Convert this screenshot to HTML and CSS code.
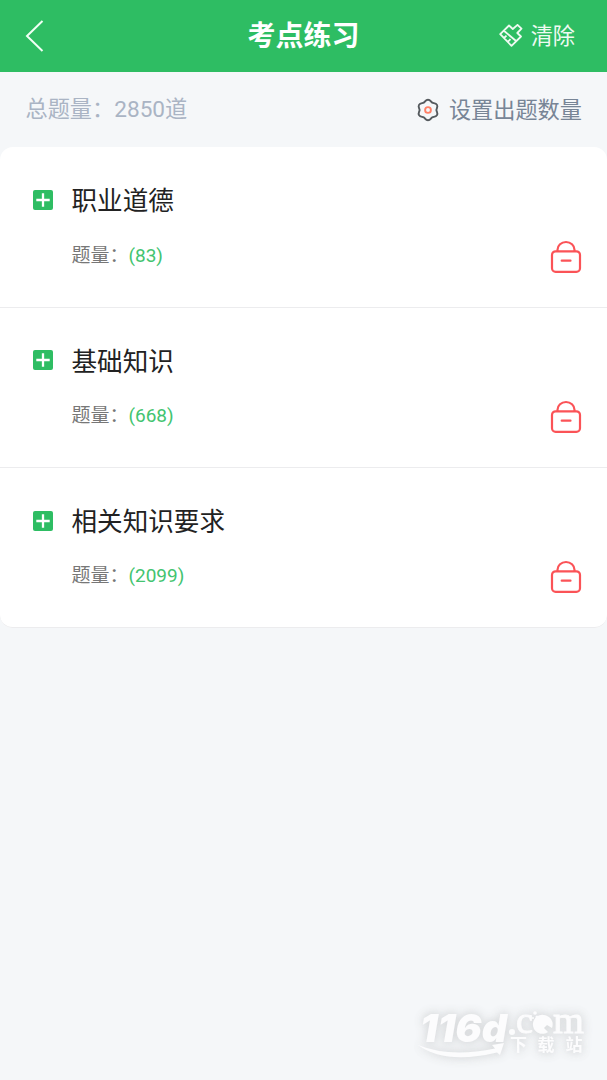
FILE: index.html
```html
<!DOCTYPE html>
<html lang="zh-CN">
<head>
<meta charset="utf-8">
<title>考点练习</title>
<link rel="stylesheet" href="styles.css">
</head>
<body>
<svg class="defs" aria-hidden="true">
  <symbol id="plus" viewBox="0 0 20 20"><rect width="20" height="20" rx="2" fill="#2ebd63"/><path d="M3.3 10h13.4M10 3.3v13.4" stroke="#fff" stroke-width="2.3"/></symbol>
  <symbol id="lock" viewBox="0 0 32 34"><rect x="2" y="11.3" width="28" height="20.6" rx="3.6"/><path d="M7.5 11V9.8a8.5 7.8 0 0 1 17 0V11M11.7 20.7h8.8"/></symbol>
</svg>
<header class="header">
  <svg class="back" viewBox="0 0 20 34"><path d="M17.5 2 2 17l15.500 15"/></svg>
  <h1 class="title">考点练习</h1>
  <div class="clear">
    <svg class="brush" viewBox="0 0 24 24"><path d="M1.200 10.200 10 1.500 13.800 5 18.500 .9 22.500 4.700 18.300 9 22 12.500 12.500 21.800ZM4.900 6.800 17.400 17.300M5 14 7.500 11.600M8.800 17.900 11.500 15.200"/></svg>
    <span>清除</span>
  </div>
</header>
<div class="toolbar">
  <span class="total">总题量：<span class="num">2850</span>道</span>
  <div class="setting">
    <svg class="gear" viewBox="0 0 24 24"><path d="M7.800 4.600C9.200 3.900 9.500 1.800 12 1.800S14.800 3.900 16.200 4.600C17.600 5.400 19.800 4.800 21 6.900S20.400 10.400 20.400 12C20.400 13.600 22.200 15 21 17.100S17.600 18.600 16.200 19.400C14.800 20.100 14.500 22.200 12 22.200S9.200 20.100 7.800 19.400C6.400 18.600 4.200 19.200 3 17.100S3.600 13.600 3.600 12C3.600 10.400 1.800 9 3 6.900S6.400 5.400 7.800 4.600Z"/><circle cx="12" cy="12" r="2.900"/></svg>
    <span>设置出题数量</span>
  </div>
</div>
<main class="list">
  <section class="item">
    <svg class="plus"><use href="#plus"/></svg>
    <div class="info"><h2 class="name">职业道德</h2><p class="count">题量：<b>(83)</b></p></div>
    <svg class="lock"><use href="#lock"/></svg>
  </section>
  <section class="item">
    <svg class="plus"><use href="#plus"/></svg>
    <div class="info"><h2 class="name">基础知识</h2><p class="count">题量：<b>(668)</b></p></div>
    <svg class="lock"><use href="#lock"/></svg>
  </section>
  <section class="item">
    <svg class="plus"><use href="#plus"/></svg>
    <div class="info"><h2 class="name">相关知识要求</h2><p class="count">题量：<b>(2099)</b></p></div>
    <svg class="lock"><use href="#lock"/></svg>
  </section>
</main>
<svg class="watermark" viewBox="0 0 207 90">
  <text class="wm-num" x="20" y="52" textLength="87" lengthAdjust="spacingAndGlyphs">116d</text>
  <path d="M18 55Q50 68 95 58.500L92 55 104 53 100 65 97 62.500Q45 75 18 55Z"/>
  <circle cx="112" cy="42" r="3"/>
  <text class="wm-com" x="116" y="43" textLength="17" lengthAdjust="spacingAndGlyphs">c</text>
  <path d="M144 25a9.500 9.500 0 1 0 4 17l-4-4 3-3 5 3a9.500 9.500 0 0 0-8-13Z"/>
  <circle cx="135" cy="23" r="1.800"/><circle cx="137" cy="27" r="1.500"/><circle cx="133" cy="28" r="1"/>
  <text class="wm-com" x="153" y="43" textLength="31" lengthAdjust="spacingAndGlyphs">m</text>
  <text class="wm-cn" x="110 137.500 165.500" y="61">下载站</text>
</svg>
</body>
</html>
```
FILE: styles.css
```css
* { box-sizing: border-box; }
body {
  margin: 0;
  min-height: 1080px;
  background: #f5f7f9;
  font-family: Roboto, "Noto Sans CJK SC", sans-serif;
  overflow: hidden;
}
h1, h2, p { margin: 0; font-weight: 400; }
svg { display: block; flex: none; }
.defs { display: none; }
.header {
  height: 72.4px;
  padding: 0 32px 0 25px;
  background: #2ebd63;
  color: #fff;
  display: grid;
  grid-template-columns: 1fr auto 1fr;
  align-items: center;
}
.back { width: 20px; height: 34px; fill: none; stroke: #f0fff4; stroke-width: 2; }
.title { padding: 2px 0 0 1px; margin: 0 -3px 0 3px; font-size: 28px; line-height: 40px; font-weight: 700; }
.clear {
  display: flex;
  align-items: center;
  justify-content: flex-end;
  gap: 8px;
  font-size: 22.2px;
  line-height: 32px;
  color: #effaf2;
}
.brush { width: 24px; height: 24px; fill: none; stroke: #effaf2; stroke-width: 1.8; stroke-linejoin: round; }
.toolbar {
  height: 75.100px;
  padding: 0 25px 0 25.5px;
  display: flex;
  align-items: center;
  justify-content: space-between;
  font-size: 22.2px;
  line-height: 32px;
}
.total { color: #aab4c4; }
.num { font-size: 22.600px; }
.setting { display: flex; align-items: center; gap: 8.500px; color: #788596; }
.gear { width: 24px; height: 24px; fill: none; stroke: #555a5e; stroke-width: 1.900; }
.gear circle { stroke: #ff8067; }
.list { background: #fff; border-radius: 13px; }
.item {
  height: 160.200px;
  padding: 34px 25px 0 33.300px;
  display: flex;
  align-items: flex-start;
  border-bottom: 1.500px solid #ececee;
}
.item:last-child { height: 160px; border-radius: 0 0 13px 13px; }
.plus { width: 20px; height: 20px; margin-top: 8.700px; }
.info { flex: 1; padding: 1px 0 0 18.200px; }
.name { font-size: 25.600px; line-height: 38px; color: #222; }
.count { margin-top: 21.500px; font-size: 19px; line-height: 28px; color: #777; }
.count b { color: #43c470; font-weight: 400; }
.lock {
  width: 32px;
  height: 34px;
  margin-top: 58.300px;
  fill: none;
  stroke: #fb5357;
  stroke-width: 2.200;
  stroke-linecap: round;
}
.watermark {
  position: absolute;
  left: 400px;
  top: 990px;
  width: 207px;
  height: 90px;
  fill: #fcfcfd;
  filter: drop-shadow(0 0 5px #d8dadc) drop-shadow(0 0 3px #e2e4e6);
}
.wm-num { font: italic 900 39px Inter, sans-serif; }
.wm-com { font: 400 37px "Liberation Serif", serif; stroke: #fcfcfd; stroke-width: .8; }
.wm-cn { font: 700 17px "Noto Sans CJK SC", sans-serif; }
```
